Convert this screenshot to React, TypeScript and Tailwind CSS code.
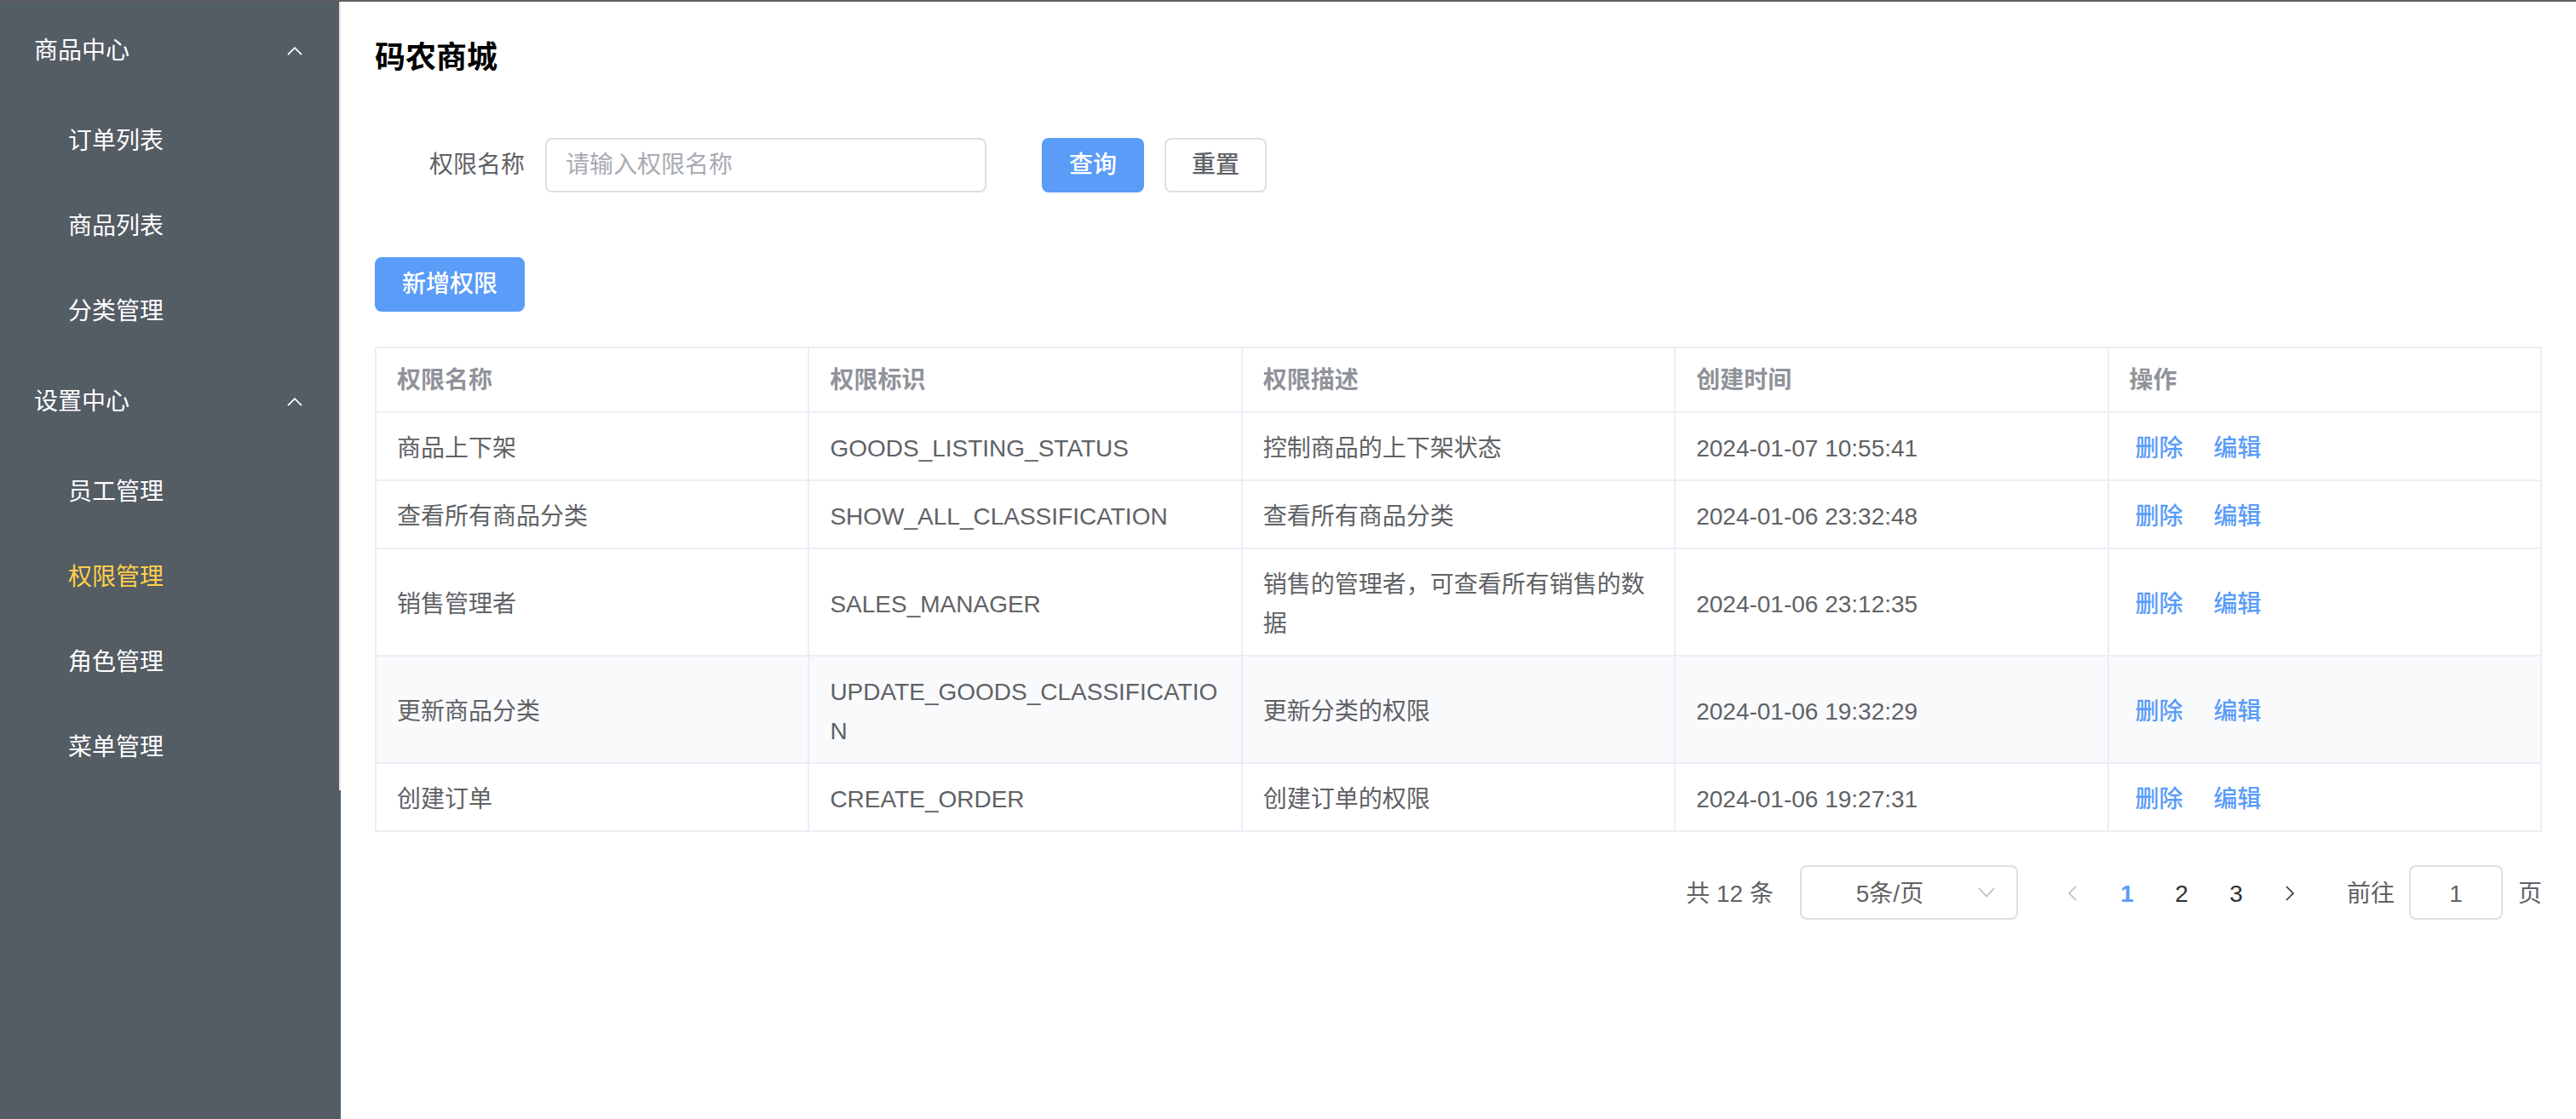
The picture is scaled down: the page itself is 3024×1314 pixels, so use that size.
import React from "react";

type Row = {
  name: string;
  code: string[];
  desc: string;
  time: string;
  hover?: boolean;
};

const rows: Row[] = [
  { name: "商品上下架", code: ["GOODS_LISTING_STATUS"], desc: "控制商品的上下架状态", time: "2024-01-07 10:55:41" },
  { name: "查看所有商品分类", code: ["SHOW_ALL_CLASSIFICATION"], desc: "查看所有商品分类", time: "2024-01-06 23:32:48" },
  { name: "销售管理者", code: ["SALES_MANAGER"], desc: "销售的管理者，可查看所有销售的数据", time: "2024-01-06 23:12:35" },
  { name: "更新商品分类", code: ["UPDATE_GOODS_CLASSIFICATIO", "N"], desc: "更新分类的权限", time: "2024-01-06 19:32:29", hover: true },
  { name: "创建订单", code: ["CREATE_ORDER"], desc: "创建订单的权限", time: "2024-01-06 19:27:31" },
];

const groups = [
  { title: "商品中心", items: ["订单列表", "商品列表", "分类管理"] },
  { title: "设置中心", items: ["员工管理", "权限管理", "角色管理", "菜单管理"] },
];

function Caret() {
  return (
    <svg width="18" height="10" viewBox="0 0 18 10" fill="none">
      <path d="M1 9.2 L9 1.2 L17 9.2" stroke="#ffffff" strokeWidth="1.8" />
    </svg>
  );
}

function Sidebar() {
  return (
    <aside className="w-[400px] shrink-0 bg-[#545c64]">
      <nav className="border-r-2 border-[#e6e6e6] pt-[2px]">
        {groups.map((g) => (
          <div key={g.title}>
            <div className="flex h-[112px] items-center justify-between pl-[40px] pr-[43px] text-[28px] text-white">
              <span>{g.title}</span>
              <Caret />
            </div>
            {g.items.map((it) => (
              <div
                key={it}
                className={
                  it === "权限管理"
                    ? "flex h-[100px] items-center pl-[80px] text-[28px] text-[#ffd04b]"
                    : "flex h-[100px] items-center pl-[80px] text-[28px] text-white"
                }
              >
                {it}
              </div>
            ))}
          </div>
        ))}
      </nav>
    </aside>
  );
}

const headers = ["权限名称", "权限标识", "权限描述", "创建时间", "操作"];

function Table() {
  return (
    <div className="mt-[41px] grid grid-cols-5 border-l-2 border-t-2 border-[#ebeef5]">
      {headers.map((h) => (
        <div
          key={h}
          className="border-b-2 border-r-2 border-[#ebeef5] px-[24px] pb-[14px] pt-[16px] text-[28px] font-bold leading-[44px] text-[#909399]"
        >
          {h}
        </div>
      ))}
      {rows.map((r) => {
        const cell = r.hover
          ? "flex items-center border-b-2 border-r-2 border-[#ebeef5] bg-[#f9fafc] px-[24px] pb-[13px] pt-[19px] text-[28px] leading-[46px] text-[#606266]"
          : "flex items-center border-b-2 border-r-2 border-[#ebeef5] bg-white px-[24px] pb-[13px] pt-[19px] text-[28px] leading-[46px] text-[#606266]";
        const actCell = r.hover
          ? "flex items-center border-b-2 border-r-2 border-[#ebeef5] bg-[#f9fafc] pl-[31px] pb-[13px] pt-[19px] text-[28px] leading-[46px]"
          : "flex items-center border-b-2 border-r-2 border-[#ebeef5] bg-white pl-[31px] pb-[13px] pt-[19px] text-[28px] leading-[46px]";
        return (
          <React.Fragment key={r.name}>
            <div className={cell}>{r.name}</div>
            <div className={cell}>
              <div>
                {r.code.map((c) => (
                  <div key={c} className="whitespace-nowrap">
                    {c}
                  </div>
                ))}
              </div>
            </div>
            <div className={cell}>{r.desc}</div>
            <div className={cell}>{r.time}</div>
            <div className={actCell}>
              <span className="w-[92px] font-medium text-[#5a9cf8]">删除</span>
              <span className="font-medium text-[#5a9cf8]">编辑</span>
            </div>
          </React.Fragment>
        );
      })}
    </div>
  );
}

function Pagination() {
  return (
    <div className="mt-[39px] flex h-[64px] items-center justify-end text-[28px] text-[#606266]">
      <span className="pt-[3px]">共 12 条</span>
      <div className="ml-[31px] flex h-[64px] w-[256px] items-center rounded-[8px] border-2 border-[#dcdfe6] bg-white">
        <span className="flex-1 pt-[3px] text-center">5条/页</span>
        <svg className="mr-[25px]" width="20" height="12" viewBox="0 0 20 12" fill="none">
          <path d="M1 1 L10 10.5 L19 1" stroke="#b7bbc3" strokeWidth="1.6" />
        </svg>
      </div>
      <div className="ml-[32px] flex w-[64px] items-center justify-center pt-[2px]">
        <svg width="11" height="18" viewBox="0 0 11 18" fill="none">
          <path d="M10 1 L2 9 L10 17" stroke="#b7bbc3" strokeWidth="1.6" />
        </svg>
      </div>
      <span className="w-[64px] pt-[3px] text-center font-semibold text-[#5a9cf8]">1</span>
      <span className="w-[64px] pt-[3px] text-center text-[#303133]">2</span>
      <span className="w-[64px] pt-[3px] text-center text-[#303133]">3</span>
      <div className="flex w-[64px] items-center justify-center pt-[2px]">
        <svg width="11" height="18" viewBox="0 0 11 18" fill="none">
          <path d="M1 1 L9 9 L1 17" stroke="#303133" strokeWidth="1.6" />
        </svg>
      </div>
      <span className="ml-[34px] pt-[3px]">前往</span>
      <div className="ml-[17px] flex h-[64px] w-[110px] items-center justify-center rounded-[8px] border-2 border-[#dcdfe6] bg-white pt-[3px] text-[#606266]">
        1
      </div>
      <span className="ml-[18px] pt-[3px]">页</span>
    </div>
  );
}

export default function App() {
  return (
    <div className="flex h-[1314px] w-[3024px] flex-col overflow-hidden bg-white font-[family-name:'Liberation_Sans','Noto_Sans_CJK_SC',sans-serif]">
      <div className="h-[2px] shrink-0 bg-[#5e5e5e]" />
      <div className="flex flex-1">
        <Sidebar />
        <main className="flex-1 px-[40px] pt-[39px]">
          <h1 className="h-[54px] text-[36px] font-bold leading-[54px] text-black">码农商城</h1>
          <div className="mt-[67px] flex h-[64px] items-center pl-[64px]">
            <span className="text-[28px] text-[#606266]">权限名称</span>
            <div className="ml-[24px] flex h-[64px] w-[518px] items-center rounded-[8px] border-2 border-[#dcdfe6] px-[22px] text-[28px] text-[#a8abb2]">
              请输入权限名称
            </div>
            <button className="ml-[65px] h-[64px] w-[120px] rounded-[8px] bg-[#5a9cf8] text-[28px] font-medium text-white">
              查询
            </button>
            <button className="ml-[24px] h-[64px] w-[120px] rounded-[8px] border-2 border-[#dcdfe6] bg-white text-[28px] font-medium text-[#606266]">
              重置
            </button>
          </div>
          <div className="mt-[76px] flex">
            <button className="h-[64px] w-[176px] rounded-[8px] bg-[#5a9cf8] text-[28px] font-medium text-white">
              新增权限
            </button>
          </div>
          <Table />
          <Pagination />
        </main>
      </div>
    </div>
  );
}
